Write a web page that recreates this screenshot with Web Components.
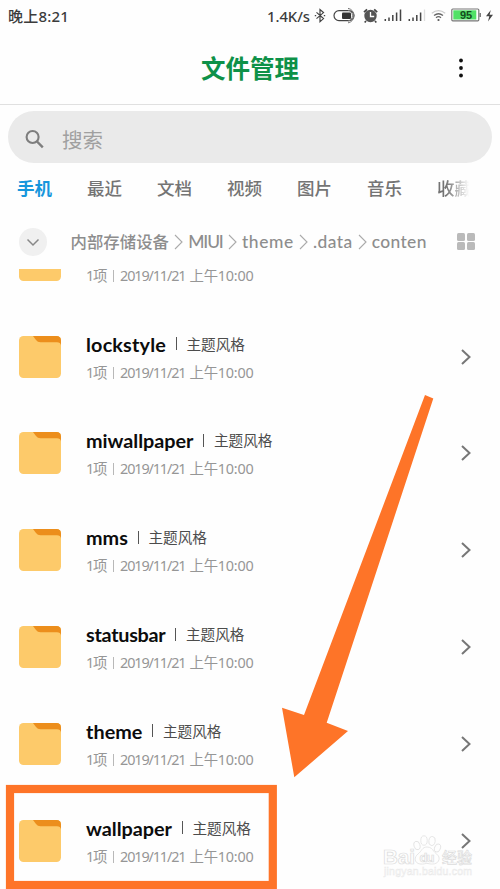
<!DOCTYPE html>
<html lang="zh-CN">
<head>
<meta charset="utf-8">
<title>文件管理</title>
<style>
html,body{margin:0;padding:0;background:#fefefe}
body{width:500px;height:889px;overflow:hidden;font-family:"Noto Sans","Noto Sans CJK SC",sans-serif}
</style>
</head>
<body>
<file-manager></file-manager>
<script>
const define = (name, html, setup) => {
  const template = document.createElement('template');
  template.innerHTML = html;
  customElements.define(name, class extends HTMLElement {
    connectedCallback() {
      if (this.shadowRoot) return;
      this.attachShadow({mode: 'open'}).append(template.content.cloneNode(true));
      if (setup) setup(this, this.shadowRoot);
    }
  });
};

// Text spread over a fixed measure by letter spacing.
define('fit-text', `<style>:host{display:block;flex:none;white-space:nowrap}span{display:inline-block}</style><span><slot></slot></span>`,
  (el, root) => {
    const span = root.querySelector('span');
    const width = parseFloat(el.getAttribute('w'));
    const count = [...el.textContent].length;
    const natural = span.getBoundingClientRect().width;
    el.style.width = width + 'px';
    span.style.letterSpacing = ((width - natural) / count) + 'px';
  });

define('status-bar', `<style>
:host{display:flex;height:32px;align-items:center;padding:0 4px 0 8px;color:#3c3c3c;font:500 15px/32px "Noto Sans","Noto Sans CJK SC",sans-serif}
.time{flex:1}
.rate{font-size:14.8px}
svg{display:block;flex:none}
</style>
<div class="time"><fit-text w="61">晚上8:21</fit-text></div>
<fit-text class="rate" w="43">1.4K/s</fit-text>
<svg width="186" height="32" viewBox="310 0 186 32" fill="none" stroke="#444" stroke-width="1.2">
<path d="M316.500 12.400l7 6.200-3.500 3V9.600l3.500 3-7 6M314.800 15.600h1.400M323.800 15.600h1.400"/>
<rect x="334" y="10.600" width="20" height="10" rx="5"/>
<rect x="342" y="12.500" width="9" height="6.500" rx="1" fill="#333" stroke="none"/>
<path d="M348 8.300a7.500 7.500 0 0 1 0 14.600M348 10.200a5.500 5.500 0 0 1 0 10.800" stroke="#777" stroke-width="1"/>
<circle cx="370.500" cy="16" r="6.200" fill="#555" stroke="none"/><path d="M364 12.200l3-2.900M374.200 9.300l3 2.900M366 21l-1.300 1.500M375 21l1.300 1.500" stroke-width="1.700"/><path d="M370.500 12v4.500h3.700" stroke="#fff" stroke-width="1.300"/>
<path d="M385.300 19v2M389 17.500V21M392.800 15v6M396.600 12.500V21M400.500 9.500V21M409.300 19v2M413 17.500V21M416.800 15v6M420.600 12.500V21" stroke-width="1.500"/><path d="M424.500 9.500V21" stroke="#ddd" stroke-width="1.300"/>
<path d="M431.800 13.200q6.700-5 13.400 0" stroke="#ccc"/><path d="M434 15.500q4.500-3.500 9 0M436 17.700q2.500-2 5 0" stroke="#666" stroke-width="1.300"/><circle cx="438.500" cy="20" r="1.100" fill="#555" stroke="none"/>
<rect x="451.800" y="9" width="27" height="11.800" rx="1" stroke="#777" fill="#fff"/><rect x="453.300" y="10.300" width="23" height="9.200" fill="#51e166" stroke="none"/><path d="M480.200 13v4" stroke="#777" stroke-width="1.500"/>
<text x="466" y="19" text-anchor="middle" font-family="Liberation Sans" font-weight="700" font-size="11" fill="#164d20" stroke="none">95</text>
<path d="M490.800 10l-4.800 6.200h3.300l-1.300 5.300 5-6.700h-3.400z" fill="#444" stroke="none"/>
</svg>`);

define('title-bar', `<style>
:host{display:grid;grid-template-columns:1fr auto 1fr;align-items:center;height:73px;box-sizing:border-box;border-bottom:1px solid #e0e0e0;color:#0e9148;font:700 24.500px/36px "Noto Sans CJK SC",sans-serif}
svg{grid-column:3;justify-self:end;margin-right:32px}
fit-text{grid-column:2}
</style><fit-text w="98">文件管理</fit-text>
<svg width="14" height="24" viewBox="0 0 14 24" fill="#111"><circle cx="7" cy="4.500" r="1.900"/><circle cx="7" cy="12" r="1.900"/><circle cx="7" cy="19.500" r="1.900"/></svg>`);

define('search-box', `<style>
:host{display:flex;align-items:center;height:52px;margin:6px 8px 0;border-radius:26px;background:#eaeaea;color:#a0a0a0;font:400 20.500px/30px "Noto Sans CJK SC",sans-serif;padding:3px 0 0 16px;box-sizing:border-box}
svg{margin-right:16px}
</style><svg width="22" height="22" viewBox="0 0 22 22" fill="none" stroke="#7e7e7e" stroke-width="2.100"><circle cx="8.600" cy="9" r="6"/><path d="M13 13.500l5.800 5.800" stroke-width="2.400"/></svg><fit-text w="41">搜索</fit-text>`);

define('tab-bar', `<style>
:host{display:flex;gap:35px;padding:0 0 2px 17px;height:50px;margin-bottom:-1px;box-sizing:border-box;padding-top:1px;align-items:center;color:#747474;font:500 17.500px/28px "Noto Sans CJK SC",sans-serif}
.on{color:#1796dc;font-weight:700}
.last{-webkit-mask-image:linear-gradient(90deg,#000 25%,transparent 92%)}
</style>
<fit-text class="on" w="35">手机</fit-text><fit-text w="35">最近</fit-text><fit-text w="35">文档</fit-text><fit-text w="35">视频</fit-text><fit-text w="35">图片</fit-text><fit-text w="35">音乐</fit-text><fit-text class="last" w="35">收藏</fit-text>`);

define('path-bar', `<style>
:host{display:flex;align-items:center;height:57px;padding:2px 25.500px 0 19px;box-sizing:border-box;color:#8d8d8d;font:500 16.400px/26px Lato,"Noto Sans CJK SC",sans-serif}
.drop{width:28px;height:28px;border-radius:50%;background:#f0f0f0;display:grid;place-items:center;margin-right:23.500px}
.sep{margin:0 5.200px 0 5px;flex:none}
.latin{font-size:17.400px}
.grid{margin-left:auto;display:grid;grid-template-columns:8px 8px;gap:1.400px}
.grid i{height:8px;border-radius:1.500px;background:#bababa}
svg{display:block}
</style>
<div class="drop"><svg width="14" height="10" viewBox="0 0 14 10" fill="none" stroke="#888" stroke-width="1.500"><path d="M1.500 2.500L7 8l5.500-5.500"/></svg></div>
<fit-text w="98.500">内部存储设备</fit-text>
<svg class="sep" width="9" height="16"><path d="M1 1l7 7-7 7" fill="none" stroke="#aaa" stroke-width="1.100"/></svg>
<fit-text class="latin" w="34.500">MIUI</fit-text>
<svg class="sep" width="9" height="16"><path d="M1 1l7 7-7 7" fill="none" stroke="#aaa" stroke-width="1.100"/></svg>
<fit-text class="latin" w="52">theme</fit-text>
<svg class="sep" width="9" height="16"><path d="M1 1l7 7-7 7" fill="none" stroke="#aaa" stroke-width="1.100"/></svg>
<fit-text class="latin" w="39.500">.data</fit-text>
<svg class="sep" width="9" height="16"><path d="M1 1l7 7-7 7" fill="none" stroke="#aaa" stroke-width="1.100"/></svg>
<fit-text class="latin" w="55">conten</fit-text>
<div class="grid"><i></i><i></i><i></i><i></i></div>`);

define('folder-row', `<style>
:host{display:flex;align-items:center;height:96.800px;padding:0 28px 0 19px;box-sizing:border-box}
.folder{margin-right:25px;flex:none}
.text{flex:1}
.line{display:flex;align-items:center}
.name{height:26px;color:#0c0c0c;font:700 19.800px/26px Lato,sans-serif}
.tag{font:400 14.600px/26px "Noto Sans CJK SC",sans-serif;color:#4c4c4c}
.name i{width:1.400px;height:13px;background:#555;margin:0 9.500px 0 9.500px}
.meta{height:20px;margin-top:6px;color:#969696;font:400 14.400px/20px "Noto Sans","Noto Sans CJK SC",sans-serif}
.meta i{width:1px;height:12px;background:#b8b8b8;margin:0 6.500px 0 6.500px}
.time{margin-left:4px}
svg{display:block}
</style>
<svg class="folder" width="42" height="42" viewBox="0 0 42 42"><rect width="42" height="42" rx="4.500" fill="#fdca6a"/><path d="M14 0H37.500Q42 0 42 4.500V9.500Q41.500 6.200 38 6.200H21.500Q18.500 6.200 17 4Z" fill="#ec8e1c"/></svg>
<div class="text"><div class="line name"></div>
<div class="line meta"><fit-text w="20">1项</fit-text><i></i><fit-text w="65.500">2019/11/21</fit-text><fit-text class="time" w="64">上午10:00</fit-text></div></div>
<svg class="go" width="12" height="18" viewBox="0 0 12 18" fill="none" stroke="#777" stroke-width="2"><path d="M2 2l7.500 7L2 16"/></svg>`,
  (el, root) => {
    // A row without a name is scrolled under the path bar: only its lower part is drawn.
    if (!el.hasAttribute('name')) { root.querySelector('.go').remove(); return; }
    root.querySelector('.name').innerHTML =
      `<fit-text w="${el.getAttribute('w')}">${el.getAttribute('name')}</fit-text><i></i><fit-text class="tag" w="58.500">主题风格</fit-text>`;
  });

define('file-list', `<style>:host{display:block;height:620px;overflow:hidden}div{margin-top:-57.500px}</style><div><slot></slot></div>`);

// Orange arrow and frame that lie over the list.
define('callout-marks', `<style>:host{position:absolute;inset:0;pointer-events:none}svg{display:block}</style>
<svg width="500" height="889" viewBox="0 0 500 889"><path d="M425 395L433.300 398.500L326.700 722.700L348 731L294.300 777.300L282 707.700L304 715Z" fill="#fe7428"/><rect x="10" y="789" width="262.800" height="96" fill="none" stroke="#fe7428" stroke-width="8.200"/></svg>`);

define('water-mark', `<style>:host{position:absolute;left:378px;top:830px;pointer-events:none}svg{display:block}</style>
<svg width="100" height="52" viewBox="378 830 100 52" fill="#fefefe" stroke="#dcdcdc" stroke-width=".7">
<ellipse cx="417" cy="845.500" rx="3" ry="4.300" transform="rotate(-15 417 845.500)"/><ellipse cx="424" cy="840.500" rx="3.200" ry="4.700"/><ellipse cx="432" cy="841" rx="3.200" ry="4.500" transform="rotate(10 432 841)"/><ellipse cx="437.500" cy="848" rx="2.900" ry="4.200" transform="rotate(20 437.500 848)"/>
<path d="M427 847c-5 0-5 4-9 7-4 3-4 9 2 10 4 .5 6-1 8-.5 4 1 10 1 11-4 .8-4-3-5.500-5-8-2-2.500-3-4.500-7-4.500z"/>
<text x="383" y="863.500" font-family="Liberation Sans" font-weight="700" font-size="20" textLength="32" lengthAdjust="spacingAndGlyphs">Bai</text>
<text x="419.500" y="861.500" font-family="Liberation Sans" font-weight="700" font-size="13" textLength="15">du</text>
<text x="442" y="863" font-family="Noto Sans CJK SC" font-weight="500" font-size="15" textLength="30">经验</text>
<text x="384" y="875" font-family="Liberation Sans" font-size="10.500" textLength="88" stroke="#e9e9e9" stroke-width=".5">jingyan.baidu.com</text>
</svg>`);

define('file-manager', `<style>:host{display:flex;flex-direction:column;position:relative;width:500px;height:889px;overflow:hidden}:host>*{flex:none}</style>
<status-bar></status-bar><title-bar></title-bar><search-box></search-box><tab-bar></tab-bar><path-bar></path-bar>
<file-list>
<folder-row></folder-row>
<folder-row name="lockstyle" w="80"></folder-row>
<folder-row name="miwallpaper" w="107.500"></folder-row>
<folder-row name="mms" w="42"></folder-row>
<folder-row name="statusbar" w="79.500"></folder-row>
<folder-row name="theme" w="56.500"></folder-row>
<folder-row name="wallpaper" w="86"></folder-row>
</file-list>
<water-mark></water-mark><callout-marks></callout-marks>`);
</script>
</body>
</html>
